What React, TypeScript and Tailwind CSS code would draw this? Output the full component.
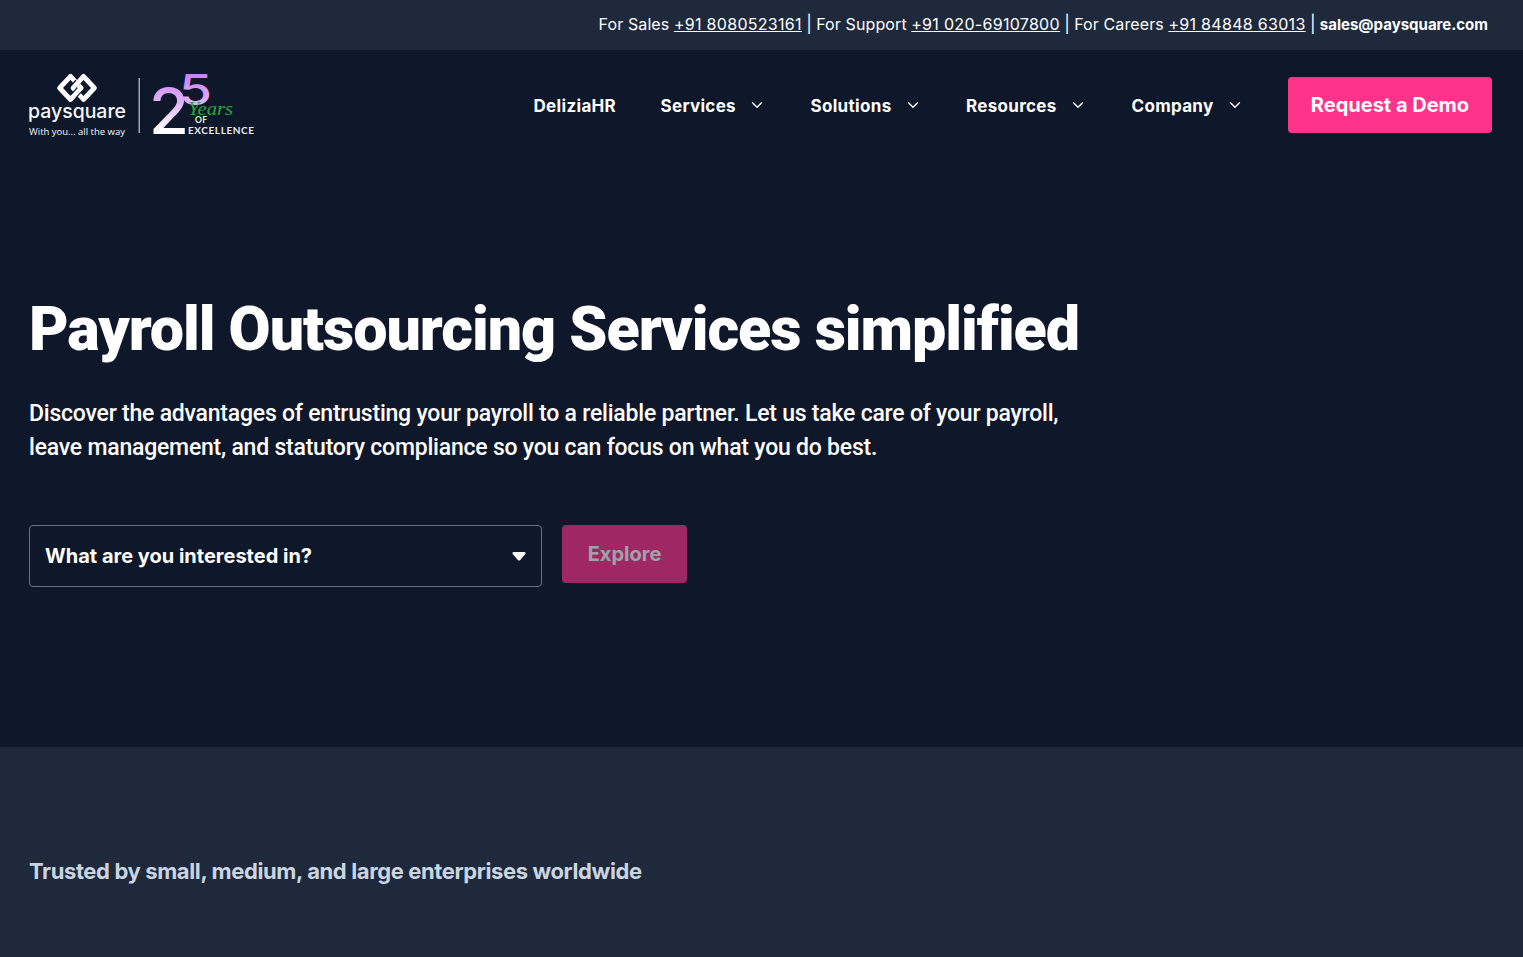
import { ChevronDown } from "lucide-react";

const CONTACTS = [
  { label: "For Sales", phone: "+91 8080523161" },
  { label: "For Support", phone: "+91 020-69107800" },
  { label: "For Careers", phone: "+91 84848 63013" },
];

const NAV_ITEMS = [
  { label: "DeliziaHR", hasMenu: false, width: "w-[127px]" },
  { label: "Services", hasMenu: true, width: "w-[150px]" },
  { label: "Solutions", hasMenu: true, width: "w-[155.5px]" },
  { label: "Resources", hasMenu: true, width: "w-[165.5px]" },
  { label: "Company", hasMenu: true, width: "w-[156.5px]" },
];

function Logo() {
  return (
    <svg
      width="226"
      height="66"
      viewBox="28 72 226 66"
      role="img"
      aria-label="Paysquare, 25 years of excellence"
    >
      <defs>
        <linearGradient id="years" gradientUnits="userSpaceOnUse" x1="0" y1="74" x2="0" y2="130">
          <stop offset="0" stopColor="#c880f5" />
          <stop offset="0.5" stopColor="#dfb2f8" />
          <stop offset="1" stopColor="#ffffff" />
        </linearGradient>
      </defs>

      {/* interlocked squares: right one over at the top, left one over at the bottom */}
      <g fill="none" strokeLinejoin="round">
        <path d="M70.5 76.3L59.6 88L70.5 99.5L81 88Z" stroke="#fff" strokeWidth="4.8" />
        <path d="M78 81.9L73 88L74.5 89.5" stroke="#0f172a" strokeWidth="7" />
        <path d="M83.5 76.3L73 88L83.5 99.5L94.4 88Z" stroke="#fff" strokeWidth="4.8" />
        <path d="M80.5 88.5L73.5 96.2" stroke="#0f172a" strokeWidth="7" />
        <path d="M78.5 85.3L81 88L70.5 99.5" stroke="#fff" strokeWidth="4.8" />
      </g>
      <g fill="#f5f7fa">
        <text x="28" y="117.5" fontFamily="Inter, sans-serif" fontSize="19" fontWeight="500" textLength="98" lengthAdjust="spacingAndGlyphs">
          paysquare
        </text>
        <text x="29" y="134.7" fontFamily="'Open Sans', sans-serif" fontSize="9.5" fontWeight="500" textLength="96" lengthAdjust="spacingAndGlyphs">
          With you... all the way
        </text>
      </g>

      <path d="M139.2 78V133" stroke="#c6c9cf" strokeWidth="1.2" />

      <g fill="url(#years)" fontFamily="Inter, sans-serif" fontWeight="500">
        <text x="149" y="134" fontSize="63" textLength="40" lengthAdjust="spacingAndGlyphs">2</text>
        <text x="179" y="104.5" fontSize="42" textLength="33" lengthAdjust="spacingAndGlyphs">5</text>
      </g>
      <text
        x="188"
        y="115"
        fill="#27a83b"
        fontFamily="'Liberation Serif', serif"
        fontSize="18"
        fontStyle="italic"
        textLength="45"
        lengthAdjust="spacingAndGlyphs"
      >
        Years
      </text>
      <g fill="#e8eaee" fontFamily="Lato, sans-serif" fontWeight="700">
        <text x="195" y="122.8" fontSize="8.5" textLength="12">OF</text>
        <text x="188" y="134" fontSize="10" textLength="66">EXCELLENCE</text>
      </g>
    </svg>
  );
}

function TopBar() {
  return (
    <div className="flex h-[50px] items-center justify-end bg-[#1e293b] pr-[35px] text-base leading-6">
      <p className="-mt-0.5 whitespace-pre">
        {CONTACTS.map((c) => (
          <span key={c.phone}>
            <span className="tracking-[0.11px]">{c.label}</span>{" "}
            <a href="#" className="tracking-[0.3px] underline">
              {c.phone}
            </a>{" "}
            <span className="-mx-[0.2px] text-[17px] leading-none">|</span>{" "}
          </span>
        ))}
        <a href="#" className="text-[15px] font-bold">
          sales@paysquare.com
        </a>
      </p>
    </div>
  );
}

function Header() {
  return (
    <header className="flex h-[110px] items-center justify-between pr-[31px] pl-7">
      <Logo />
      <div className="flex items-center">
        <nav className="flex text-[17px] font-bold tracking-[0.32px]">
          {NAV_ITEMS.map((item) => (
            <a key={item.label} href="#" className={`flex items-center gap-3 ${item.width}`}>
              <span className="pt-[3px]">{item.label}</span>
              {item.hasMenu && <ChevronDown size={18} strokeWidth={1.8} className="mb-px" />}
            </a>
          ))}
        </nav>
        <button className="h-14 w-[204px] rounded bg-[#ff338c] text-xl font-bold">
          Request a Demo
        </button>
      </div>
    </header>
  );
}

function Hero() {
  return (
    <section className="flex h-[587px] flex-col items-start px-[29px] pt-[133px]">
      <h1 className="font-[Roboto] text-[61px] leading-[73px] font-black tracking-[-1.05px] whitespace-nowrap">
        Payroll Outsourcing Services simplified
      </h1>
      <p className="mt-[31px] font-[Roboto] text-[23px] leading-[34px] font-medium tracking-[-0.22px] whitespace-nowrap">
        Discover the advantages of entrusting your payroll to a reliable partner. Let us take care of your payroll,
        <br />
        leave management, and statutory compliance so you can focus on what you do best.
      </p>
      <form className="mt-[60px] flex items-start gap-5 text-xl font-bold">
        <button
          type="button"
          className="flex h-[62px] w-[513px] items-center justify-between rounded border border-[#64748b] pr-[15px] pl-[15px]"
        >
          What are you interested in?
          <svg width="14" height="9" viewBox="0 0 14 9" fill="currentColor">
            <path d="M1.3 0H12.7Q14 .8 13.3 2L8.2 8Q7 9.2 5.8 8L.7 2Q0 .8 1.3 0Z" />
          </svg>
        </button>
        <button type="button" disabled className="h-[58px] w-[125px] rounded bg-[#ff338c] opacity-60">
          Explore
        </button>
      </form>
    </section>
  );
}

export default function App() {
  return (
    <div className="flex h-[957px] flex-col overflow-hidden bg-[#0f172a] font-[Inter] text-white">
      <TopBar />
      <Header />
      <Hero />
      <section className="flex-1 bg-[#1e293b] px-[29px] pt-[108px]">
        <h2 className="text-[22px] leading-[33px] font-bold tracking-[-0.38px] text-[#cbd5e1]">
          Trusted by small, medium, and large enterprises worldwide
        </h2>
      </section>
    </div>
  );
}
